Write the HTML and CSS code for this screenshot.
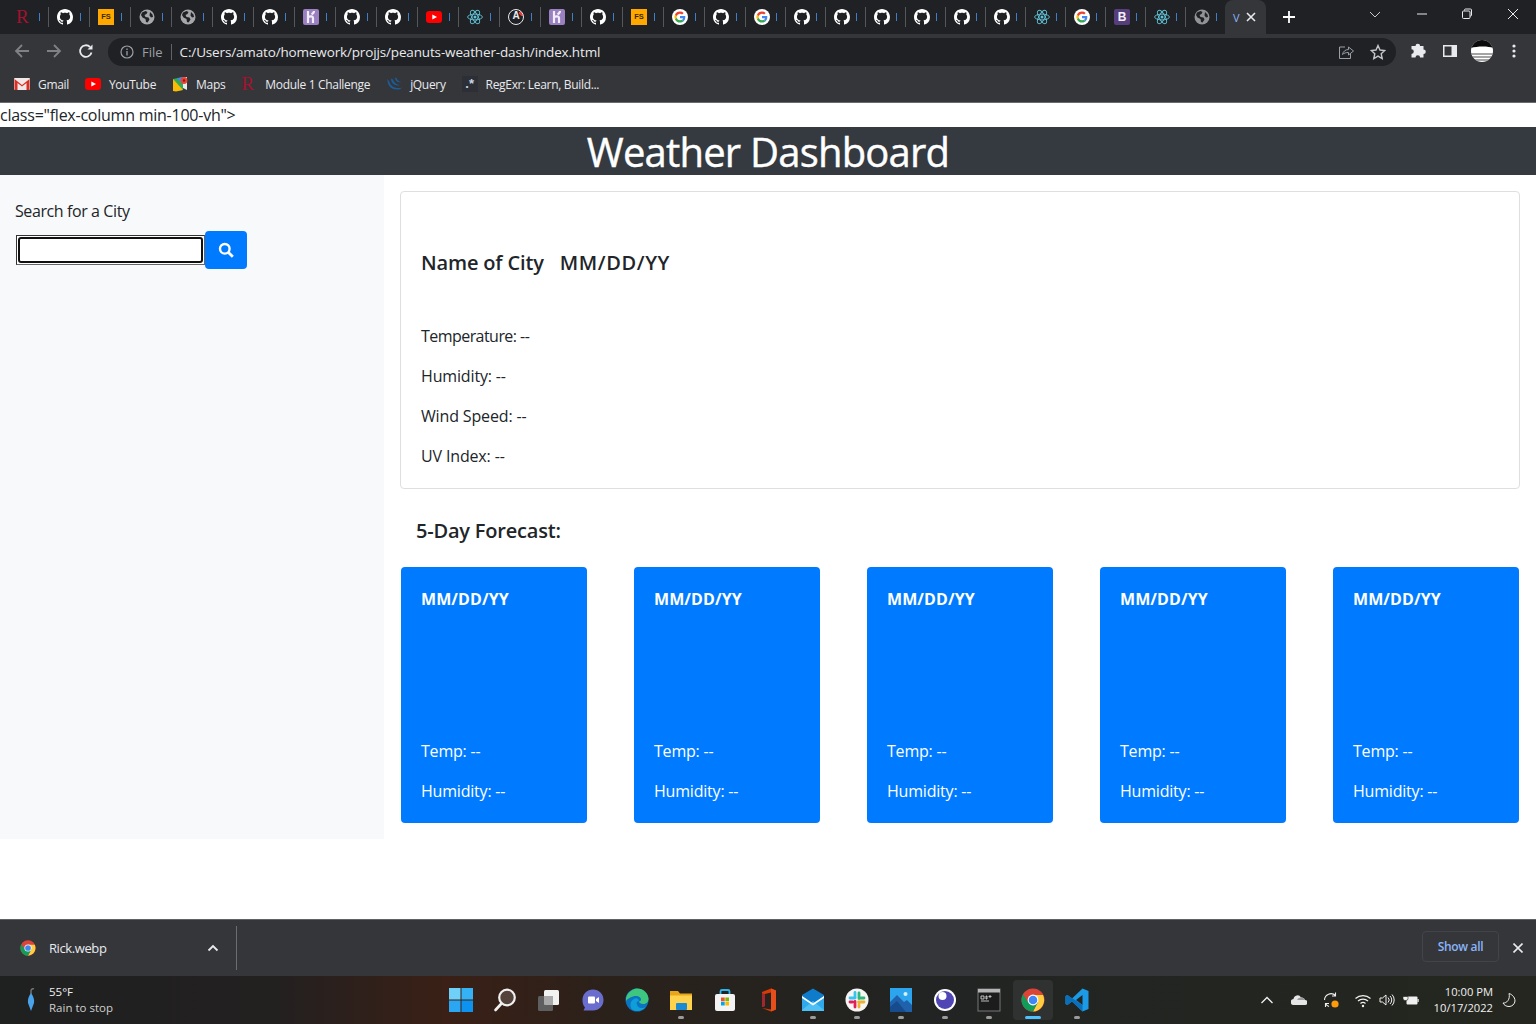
FILE: index.html
```html
<!DOCTYPE html>
<html lang="en">
<head>
    <meta charset="UTF-8">
    <meta name="viewport" content="width=device-width, initial-scale=1.0">
    <title>Weather Dashboard</title>
    <link rel="stylesheet" href="styles.css">
</head>
<body>
    <svg class="icon-defs" aria-hidden="true">
        <symbol id="i-gh" viewBox="0 0 16 16"><circle cx="8" cy="8" r="7.6" fill="#202124"/><path fill="#fff" d="M8 0C3.58 0 0 3.58 0 8c0 3.54 2.29 6.53 5.47 7.59.4.07.55-.17.55-.38 0-.19-.01-.82-.01-1.49-2.01.37-2.53-.49-2.69-.94-.09-.23-.48-.94-.82-1.13-.28-.15-.68-.52-.01-.53.63-.01 1.08.58 1.23.82.72 1.21 1.87.87 2.33.66.07-.52.28-.87.51-1.07-1.78-.2-3.64-.89-3.64-3.95 0-.87.31-1.59.82-2.15-.08-.2-.36-1.02.08-2.12 0 0 .67-.21 2.2.82.64-.18 1.32-.27 2-.27s1.36.09 2 .27c1.53-1.04 2.2-.82 2.2-.82.44 1.1.16 1.92.08 2.12.51.56.82 1.27.82 2.15 0 3.07-1.87 3.75-3.65 3.95.29.25.54.73.54 1.48 0 1.07-.01 1.93-.01 2.2 0 .21.15.46.55.38A8.013 8.013 0 0016 8c0-4.42-3.58-8-8-8z"/></symbol>
        <symbol id="i-globe" viewBox="0 0 16 16"><circle cx="8" cy="8" r="7.5" fill="#a6a7aa"/><path fill="#202124" d="M3 3.500l3.500-1.500 2 1-1 2-2 1 1 2 3 .5 1 2-2 3-1.500-.5-.5-3-3-1.500-1.500-2.500zM11 3l2.500 2.500.5 2.500-2 .5-1.500-2z"/></symbol>
        <symbol id="i-heroku" viewBox="0 0 16 16"><rect width="16" height="16" rx="2" fill="#9a7fc1"/><path fill="none" stroke="#f2eef8" stroke-width="2.200" d="M5 2v12M5 8c2-1 5-1 5 .8V14M11 2c0 1.500-1 2.500-2.500 3.200"/></symbol>
        <symbol id="i-yt" viewBox="0 0 16 16"><rect y="2" width="16" height="12" rx="3.200" fill="#f00"/><path fill="#fff" d="M6.300 5.400v5.200L11 8z"/></symbol>
        <symbol id="i-react" viewBox="0 0 16 16"><g fill="none" stroke="#61c3d8" stroke-width=".9"><ellipse cx="8" cy="8" rx="7.400" ry="2.900"/><ellipse cx="8" cy="8" rx="7.400" ry="2.900" transform="rotate(60 8 8)"/><ellipse cx="8" cy="8" rx="7.400" ry="2.900" transform="rotate(120 8 8)"/></g><circle cx="8" cy="8" r="1.500" fill="#61c3d8"/></symbol>
        <symbol id="i-google" viewBox="0 0 16 16"><circle cx="8" cy="8" r="8" fill="#fff"/><path fill="#4285f4" d="M13.300 8.100c0-.4 0-.8-.1-1.100H8v2.200h3a2.600 2.600 0 01-1.100 1.700l1.800 1.400c1-1 1.600-2.400 1.600-4.200z"/><path fill="#34a853" d="M8 13.500c1.500 0 2.700-.5 3.700-1.300l-1.800-1.400c-.5.300-1.100.5-1.900.5-1.400 0-2.700-1-3.100-2.300H3v1.400a5.500 5.500 0 005 3.100z"/><path fill="#fbbc05" d="M4.900 9a3.300 3.300 0 010-2.100V5.500H3a5.500 5.500 0 000 5z"/><path fill="#ea4335" d="M8 4.700c.8 0 1.500.3 2.100.8l1.600-1.600A5.400 5.400 0 008 2.500a5.500 5.500 0 00-5 3l1.900 1.400C5.300 5.700 6.600 4.700 8 4.700z"/></symbol>
        <symbol id="i-chrome" viewBox="0 0 24 24"><circle cx="12" cy="12" r="11.500" fill="#db4437"/><path fill="#ffcd40" d="M12 7h10a11.500 11.500 0 01-10 16.500L17 14z"/><path fill="#0f9d58" d="M12 23.500l5-9.500-10 0L2 6.300A11.500 11.500 0 0012 23.500z"/><circle cx="12" cy="12" r="5.400" fill="#fff"/><circle cx="12" cy="12" r="4.300" fill="#4285f4"/></symbol>
    </svg>

    <div class="tabstrip">
        <div class="tab"><span class="fav fav-r">R</span><span class="frag"></span></div>
        <div class="tab"><svg class="fav"><use href="#i-gh"/></svg><span class="frag"></span></div>
        <div class="tab"><span class="fav fav-fs">FS</span><span class="frag"></span></div>
        <div class="tab"><svg class="fav"><use href="#i-globe"/></svg><span class="frag"></span></div>
        <div class="tab"><svg class="fav"><use href="#i-globe"/></svg><span class="frag"></span></div>
        <div class="tab"><svg class="fav"><use href="#i-gh"/></svg><span class="frag"></span></div>
        <div class="tab"><svg class="fav"><use href="#i-gh"/></svg><span class="frag"></span></div>
        <div class="tab"><svg class="fav"><use href="#i-heroku"/></svg><span class="frag"></span></div>
        <div class="tab"><svg class="fav"><use href="#i-gh"/></svg><span class="frag"></span></div>
        <div class="tab"><svg class="fav"><use href="#i-gh"/></svg><span class="frag"></span></div>
        <div class="tab"><svg class="fav"><use href="#i-yt"/></svg><span class="frag"></span></div>
        <div class="tab"><svg class="fav"><use href="#i-react"/></svg><span class="frag"></span></div>
        <div class="tab"><span class="fav fav-a">A</span><span class="frag"></span></div>
        <div class="tab"><svg class="fav"><use href="#i-heroku"/></svg><span class="frag"></span></div>
        <div class="tab"><svg class="fav"><use href="#i-gh"/></svg><span class="frag"></span></div>
        <div class="tab"><span class="fav fav-fs">FS</span><span class="frag"></span></div>
        <div class="tab"><svg class="fav"><use href="#i-google"/></svg><span class="frag"></span></div>
        <div class="tab"><svg class="fav"><use href="#i-gh"/></svg><span class="frag"></span></div>
        <div class="tab tab-sm"><svg class="fav"><use href="#i-google"/></svg><span class="frag"></span></div>
        <div class="tab tab-sm"><svg class="fav"><use href="#i-gh"/></svg><span class="frag"></span></div>
        <div class="tab tab-sm"><svg class="fav"><use href="#i-gh"/></svg><span class="frag"></span></div>
        <div class="tab tab-sm"><svg class="fav"><use href="#i-gh"/></svg><span class="frag"></span></div>
        <div class="tab tab-sm"><svg class="fav"><use href="#i-gh"/></svg><span class="frag"></span></div>
        <div class="tab tab-sm"><svg class="fav"><use href="#i-gh"/></svg><span class="frag"></span></div>
        <div class="tab tab-sm"><svg class="fav"><use href="#i-gh"/></svg><span class="frag"></span></div>
        <div class="tab tab-sm"><svg class="fav"><use href="#i-react"/></svg><span class="frag"></span></div>
        <div class="tab tab-sm"><svg class="fav"><use href="#i-google"/></svg><span class="frag"></span></div>
        <div class="tab tab-sm"><span class="fav fav-b">B</span><span class="frag"></span></div>
        <div class="tab tab-sm"><svg class="fav"><use href="#i-react"/></svg><span class="frag"></span></div>
        <div class="tab tab-sm"><svg class="fav fav-dim"><use href="#i-globe"/></svg><span class="frag"></span></div>
        <div class="tab-active">
            <span class="tab-v">V</span>
            <svg class="tab-x" viewBox="0 0 10 10"><path d="M1 1l8 8M9 1l-8 8" stroke="#e8eaed" stroke-width="1.600"/></svg>
        </div>
        <svg class="tab-plus" viewBox="0 0 12 12"><path d="M6 0v12M0 6h12" stroke="#fff" stroke-width="1.800"/></svg>
        <div class="win-btns">
            <svg class="win-btn" viewBox="0 0 12 12"><path d="M1 4l5 5 5-5" fill="none" stroke="#c8cacd"/></svg>
            <svg class="win-btn" viewBox="0 0 12 12"><path d="M1 6h10" stroke="#e8eaed"/></svg>
            <svg class="win-btn" viewBox="0 0 12 12"><path d="M3.500 2.500V2a1 1 0 011-1h5a1 1 0 011 1v5a1 1 0 01-1 1H9" fill="none" stroke="#e8eaed"/><rect x="1.500" y="3" width="7.500" height="7.500" rx="1" fill="none" stroke="#e8eaed"/></svg>
            <svg class="win-btn" viewBox="0 0 12 12"><path d="M1 1l10 10M11 1L1 11" stroke="#e8eaed"/></svg>
        </div>
    </div>

    <div class="toolbar">
        <div class="nav-btns">
            <svg class="nav-icon" viewBox="0 0 16 16"><path d="M15 8H2M8 2L2 8l6 6" fill="none" stroke="#7f8184" stroke-width="1.800"/></svg>
            <svg class="nav-icon" viewBox="0 0 16 16"><path d="M1 8h13M8 2l6 6-6 6" fill="none" stroke="#7f8184" stroke-width="1.800"/></svg>
            <svg class="nav-icon" viewBox="0 0 16 16"><path d="M13.500 9.500A5.800 5.800 0 1112 4" fill="none" stroke="#e8eaed" stroke-width="1.800"/><path d="M14.500 1.500v5h-5z" fill="#e8eaed"/></svg>
        </div>
        <div class="omnibox">
            <svg class="info-icon" viewBox="0 0 14 14"><circle cx="7" cy="7" r="6" fill="none" stroke="#9aa0a6" stroke-width="1.200"/><path d="M7 6v4.500M7 3.500v1.400" stroke="#9aa0a6" stroke-width="1.300"/></svg>
            <span class="omni-file">File</span>
            <span class="omni-sep"></span>
            <span class="omni-url">C:/Users/amato/homework/projjs/peanuts-weather-dash/index.html</span>
            <svg class="omni-share" viewBox="0 0 16 16"><path d="M7 3H1.500v11.500h11V10" fill="none" stroke="#9aa0a6"/><path d="M4.500 10.500C5 7.500 7.500 5.500 10.500 5.500V3l5 4-5 4V8.500c-2.500 0-4.500.5-6 2z" fill="none" stroke="#9aa0a6"/></svg>
            <svg class="omni-star" viewBox="0 0 16 16"><path d="M8 1.500l2 4.500 4.800.5-3.600 3.200 1 4.800L8 12.100l-4.200 2.400 1-4.800L1.200 6.500 6 6z" fill="none" stroke="#c4c7ca" stroke-width="1.400"/></svg>
        </div>
        <div class="tool-icons">
            <svg class="tool-icon" viewBox="0 0 16 16"><path fill="#e8eaed" d="M5.500 3a2.300 2.300 0 014.600 0h3.400v3.400a2.300 2.300 0 010 4.600V14.500h-3.400a2.300 2.300 0 00-4.600 0H1.500v-3.600a2.300 2.300 0 000-4.600V3z"/></svg>
            <svg class="tool-icon" viewBox="0 0 16 16"><path fill="#e8eaed" fill-rule="evenodd" d="M1 2h14v12H1zM2.500 3.500v9h7v-9z"/></svg>
            <svg class="avatar" viewBox="0 0 22 22"><defs><clipPath id="av"><circle cx="11" cy="11" r="11"/></clipPath></defs><g clip-path="url(#av)"><rect width="22" height="22" fill="#fff"/><path d="M0 0h22v8c-4-2-16-2-22 0z" fill="#0b0b0b"/><path d="M0 14h22M0 17h22M0 20h22" stroke="#4a4a4a" stroke-width="1.200"/></g></svg>
            <svg class="tool-icon" viewBox="0 0 16 16"><circle cx="8" cy="3" r="1.600" fill="#e8eaed"/><circle cx="8" cy="8" r="1.600" fill="#e8eaed"/><circle cx="8" cy="13" r="1.600" fill="#e8eaed"/></svg>
        </div>
    </div>

    <div class="bookmarks">
        <div class="bookmark"><svg class="fav" viewBox="0 0 16 16"><rect y="2" width="16" height="12" rx="1" fill="#f1e9e7"/><path d="M.5 3L8 9l7.500-6v11h-3V7L8 10.500 3.500 7v7h-3z" fill="#d93025"/></svg>Gmail</div>
        <div class="bookmark"><svg class="fav"><use href="#i-yt"/></svg>YouTube</div>
        <div class="bookmark"><svg class="fav" viewBox="0 0 16 16"><path d="M1 3l10-2v13L1 15z" fill="#34a853"/><path d="M1 3l10 11-7 1.500L1 15z" fill="#fbbc05"/><path d="M5 2.200l6 6V1z" fill="#4285f4"/><path d="M11 1v11l4 2V1z" fill="#e8eaed"/><circle cx="12" cy="4.500" r="3.400" fill="#ea4335"/><circle cx="12" cy="4.500" r="1.200" fill="#8c1b11"/></svg>Maps</div>
        <div class="bookmark"><span class="fav fav-r">R</span>Module 1 Challenge</div>
        <div class="bookmark"><svg class="fav" viewBox="0 0 16 16"><path d="M1.500 3C1 9 5 14 12 13.500 15 13.200 15.500 12 16 11.500 12 13 5 12 3.500 6zM5 2.500c0 5 4 8 10 6.500-4 0-7-2-8-5.500zM9 1.500c0 3.500 3 5.500 6.500 4.500-2.500-.2-4-1.500-5-4z" fill="#1b5d9a"/></svg>jQuery</div>
        <div class="bookmark"><span class="fav fav-rx">.*</span>RegExr: Learn, Build...</div>
    </div>

    <div class="page">
        <div class="stray">class="flex-column min-100-vh"&gt;</div>
        <header class="site-header">
            <h1>Weather Dashboard</h1>
        </header>
        <div class="content">
            <aside class="sidebar">
                <label class="search-label" for="city">Search for a City</label>
                <form class="search-form">
                    <span class="search-frame"><input class="search-input" id="city" type="text"></span>
                    <button type="button" class="search-btn">
                        <svg viewBox="0 0 16 16"><circle cx="6.800" cy="6.800" r="4.800" fill="none" stroke="#fff" stroke-width="2.400"/><path d="M10.500 10.500l4.300 4.300" stroke="#fff" stroke-width="2.800"/></svg>
                    </button>
                </form>
            </aside>
            <main class="main">
                <section class="today">
                    <h2 class="today-title"><span>Name of City</span><span class="today-date">MM/DD/YY</span></h2>
                    <p class="today-temp">Temperature: --</p>
                    <p>Humidity: --</p>
                    <p>Wind Speed: --</p>
                    <p>UV Index: --</p>
                </section>
                <h3 class="forecast-title">5-Day Forecast:</h3>
                <div class="forecast">
                    <div class="day-card">
                        <h4>MM/DD/YY</h4>
                        <p>Temp: --</p>
                        <p>Humidity: --</p>
                    </div>
                    <div class="day-card">
                        <h4>MM/DD/YY</h4>
                        <p>Temp: --</p>
                        <p>Humidity: --</p>
                    </div>
                    <div class="day-card">
                        <h4>MM/DD/YY</h4>
                        <p>Temp: --</p>
                        <p>Humidity: --</p>
                    </div>
                    <div class="day-card">
                        <h4>MM/DD/YY</h4>
                        <p>Temp: --</p>
                        <p>Humidity: --</p>
                    </div>
                    <div class="day-card">
                        <h4>MM/DD/YY</h4>
                        <p>Temp: --</p>
                        <p>Humidity: --</p>
                    </div>
                </div>
            </main>
        </div>
    </div>

    <div class="downloads">
        <div class="dl-item">
            <svg class="dl-icon"><use href="#i-chrome"/></svg>
            <span class="dl-name">Rick.webp</span>
            <svg class="dl-chevron" viewBox="0 0 12 8"><path d="M1.500 6.500L6 2l4.500 4.500" fill="none" stroke="#e8eaed" stroke-width="1.800"/></svg>
        </div>
        <button type="button" class="show-all">Show all</button>
        <svg class="dl-close" viewBox="0 0 10 10"><path d="M.5.5l9 9M9.500.5l-9 9" stroke="#e8eaed" stroke-width="1.600"/></svg>
    </div>

    <div class="taskbar">
        <div class="weather">
            <svg class="umbrella" viewBox="0 0 10 24"><path d="M5 6V3a2 2 0 013-2" fill="none" stroke="#777" stroke-width="1.400"/><path d="M5 5c2.500 3 3.500 7 3 10l-3 8-3-8C1.500 12 2.500 8 5 5z" fill="#4aa3ea"/></svg>
            <div class="weather-text">
                <span class="temp">55°F</span>
                <span class="cond">Rain to stop</span>
            </div>
        </div>
        <div class="apps">
            <div class="app"><svg viewBox="0 0 24 24"><path fill="#6fd0f8" d="M0 0h11.500v11.500H0z"/><path fill="#35b2f5" d="M12.500 0H24v11.500H12.500z"/><path fill="#2aa6f2" d="M0 12.500h11.500V24H0z"/><path fill="#0e92ef" d="M12.500 12.500H24V24H12.500z"/></svg></div>
            <div class="app"><svg viewBox="0 0 24 24"><circle cx="14" cy="9.500" r="7.800" fill="#54433c" stroke="#f0f0f0" stroke-width="2.200"/><path d="M8.500 15.500l-6 6.500" stroke="#f0f0f0" stroke-width="2.600" stroke-linecap="round"/></svg></div>
            <div class="app"><svg viewBox="0 0 24 24"><rect x="7" y="2" width="15" height="15" rx="1.500" fill="#f2f2f2"/><rect x="1" y="8" width="15" height="15" rx="1.500" fill="#5f5f5f"/><path d="M7 8h9v9H8a1 1 0 01-1-1z" fill="#a9a9a9"/></svg></div>
            <div class="app"><svg viewBox="0 0 24 24"><path d="M12 1.500c6 0 10.500 4.500 10.500 10.500S18 22.500 12 22.500H2.500l1.500-3C2.300 17.500 1.500 15 1.500 12 1.500 6 6 1.500 12 1.500z" fill="#6a6dcd"/><rect x="7" y="8.500" width="7" height="7" rx="1" fill="#fff"/><path d="M15 11l3-2v6l-3-2z" fill="#fff"/></svg></div>
            <div class="app"><svg viewBox="0 0 24 24"><circle cx="12" cy="12" r="11.500" fill="#0c72c4"/><path d="M1 10C3 3 9 .5 12 .5c6.500 0 11.500 5 11.500 10.500 0 3-2.500 5-5.500 5-2 0-4-1-4-2.500 2-.5 2.500-2 1.500-3.500C14 8 11 7.500 8 8.500 5 9.500 2 11 1 13z" fill="#3ec57e"/><path d="M8 22c-3-2-3.500-7-.5-10s6-2 6.500 1c-3 .5-3 3-1 5.500 1.500 1.500 5 2.500 7.500 .5-2 3-8 5.500-12.500 3z" fill="#0e9fd8"/></svg></div>
            <div class="app"><svg viewBox="0 0 24 24"><path d="M1 3h8l2 2.500h12V9H1z" fill="#e8a71a"/><path d="M1 7.500h22V22H1z" fill="#ffd24d"/><rect x="7" y="15" width="11" height="7" rx="1" fill="#1a8ad4"/></svg></div>
            <div class="app"><svg viewBox="0 0 24 24"><path d="M7.500 6V3.500a1.500 1.500 0 011.500-1.500h6a1.500 1.500 0 011.500 1.500V6" fill="none" stroke="#2cb6f0" stroke-width="1.800"/><rect x="2" y="6" width="20" height="17" rx="2" fill="#f3f3f3"/><path fill="#f25022" d="M8 9.500h3.700v3.700H8z"/><path fill="#7fba00" d="M12.300 9.500H16v3.700h-3.700z"/><path fill="#00a4ef" d="M8 13.800h3.700v3.700H8z"/><path fill="#ffb900" d="M12.300 13.800H16v3.700h-3.700z"/></svg></div>
            <div class="app"><svg viewBox="0 0 24 24"><path d="M5 4l9-3.500 5 2v19l-5 2-9-3.500 9 1.500V4.500L8 6v12l-3 1z" fill="#d83b01"/><path d="M14 .5l5 2v19l-5 2z" fill="#e84d1c"/><path d="M5 5l3 1v12l-3 1z" fill="#a3262e"/></svg></div>
            <div class="app"><svg viewBox="0 0 24 24"><path d="M1 7l11-6.500L23 7v15a1 1 0 01-1 1H2a1 1 0 01-1-1z" fill="#0f7bcb"/><path d="M1 8l11 7 11-7v15H1z" fill="#30a8ec"/><path d="M1 22l11-9 11 9v1H1z" fill="#4fc0f5"/><path d="M1 8l11 7.500L23 8v2l-11 7.500L1 10z" fill="#fff"/></svg></div>
            <div class="app"><svg viewBox="0 0 24 24"><circle cx="12" cy="12" r="11.500" fill="#f7f5f4"/><path d="M10 4.500v5" stroke="#36c5f0" stroke-width="2.800" stroke-linecap="round"/><path d="M5 10h5" stroke="#36c5f0" stroke-width="2.800" stroke-linecap="round"/><path d="M14 5v5.500M19 10h-3" stroke="#2eb67d" stroke-width="2.800" stroke-linecap="round"/><path d="M19 14h-5.500M14 19v-2.500" stroke="#ecb22e" stroke-width="2.800" stroke-linecap="round"/><path d="M10 19v-5.500M5 14h2.500" stroke="#e01e5a" stroke-width="2.800" stroke-linecap="round"/></svg></div>
            <div class="app"><svg viewBox="0 0 24 24"><rect x="1" y="0" width="22" height="24" fill="#2da5ee"/><path d="M1 24V14l7-7 7 7 3-2 5 5v7z" fill="#1f62ab"/><path d="M1 24v-5l7-6 9 11z" fill="#164b8d"/><circle cx="16.500" cy="6" r="2" fill="#d5f0ff"/></svg></div>
            <div class="app"><svg viewBox="0 0 24 24"><circle cx="12" cy="12" r="11" fill="#fff"/><circle cx="12" cy="12" r="9" fill="#4f45b4"/><circle cx="9.500" cy="8" r="4" fill="#fff"/></svg></div>
            <div class="app"><svg viewBox="0 0 24 24"><rect x="1" y="1" width="22" height="22" fill="#1c1c1c" stroke="#777"/><rect x="1" y="1" width="22" height="3.500" fill="#b5b5b5"/><path d="M4 8h3v3H4zM9 8h1v3H9zM12 8h2v1h-2zM4 13h8" stroke="#e8e8e8" stroke-width=".8" fill="none"/></svg></div>
            <div class="app app-active"><svg><use href="#i-chrome"/></svg></div>
            <div class="app"><svg viewBox="0 0 24 24"><path d="M17.500.5L23.500 3v18l-6 2.500L7 13.500 2.500 17 .5 16V8l2-1 4.500 3.500zM17.500 7L11 12l6.500 5z" fill="#1c9ae6"/><path d="M.5 8l2-1L17.500 17v6.500L7 13.500 2.500 17 .5 16z" fill="#0a6fb8"/></svg></div>
        </div>
        <div class="tray">
            <svg class="tray-icon" viewBox="0 0 16 16"><path d="M2.500 11L8 5.500l5.500 5.500" fill="none" stroke="#f0f0f0" stroke-width="1.300"/></svg>
            <svg class="tray-icon" viewBox="0 0 16 16"><path d="M3 13a3 3 0 01-.5-6 4 4 0 017.500-1.500 3.500 3.500 0 014 2.500 2.500 2.500 0 010 5z" fill="#e6e6e6"/><path d="M10 5.500a3.500 3.500 0 014 2.500H6a4 4 0 014-2.500z" fill="#9a9a9a"/></svg>
            <svg class="tray-icon" viewBox="0 0 16 16"><path d="M1.500 8A6.500 6.500 0 0112.500 3.500M12.500.5V4H9M2.500 15v-3.500H6M2.500 11.500A6.500 6.500 0 006 14.500" fill="none" stroke="#f0f0f0" stroke-width="1.100"/><circle cx="12" cy="12" r="3.600" fill="#ff9a0d"/></svg>
            <svg class="tray-icon tray-wifi" viewBox="0 0 16 16"><path d="M.5 6.500a11 11 0 0115 0M3 9a7.500 7.500 0 0110 0M5.500 11.500a3.800 3.800 0 015 0" fill="none" stroke="#f0f0f0" stroke-width="1.200"/><circle cx="8" cy="14" r="1.200" fill="#f0f0f0"/></svg>
            <svg class="tray-icon tray-vol" viewBox="0 0 16 16"><path d="M1 6v4h2.500L7 13V3L3.500 6z" fill="none" stroke="#f0f0f0"/><path d="M9 5.500a3.500 3.500 0 010 5M11 4a5.500 5.500 0 010 8M13 2.500a8 8 0 010 11" fill="none" stroke="#f0f0f0"/></svg>
            <svg class="tray-icon tray-bat" viewBox="0 0 16 16"><rect x="3.500" y="4.500" width="11" height="8" rx="1" fill="#f0f0f0"/><path d="M14.500 7h1.200v3h-1.200z" fill="#f0f0f0"/><path d="M1 1.500v3M4 1.500v3M0 4.500h5v2a2 2 0 01-2 2H2a2 2 0 01-2-2z" fill="#f0f0f0" stroke="#24261f" stroke-width=".6"/></svg>
            <div class="clock">
                <span>10:00 PM</span>
                <span>10/17/2022</span>
            </div>
            <svg class="tray-moon" viewBox="0 0 16 16"><path d="M8 1.500c2 .5 6 3 6 7.500a6 6 0 01-6 5.500c-3 0-5-1.500-6-3.500 3.500.5 7.500-3.500 6-9.500z" fill="none" stroke="#f0f0f0" stroke-width="1"/></svg>
        </div>
    </div>
</body>
</html>
```

FILE: styles.css
```css
* {
    box-sizing: border-box;
}
body {
    font-family: "Open Sans", "Noto Sans", sans-serif;
    margin: 0;
    padding: 0;
    height: 1024px;
    display: flex;
    flex-direction: column;
    overflow: hidden;
    background-color: #fff;
    color: #212529;
}
.icon-defs {
    width: 0;
    height: 0;
    display: block;
    flex: none;
}
svg {
    display: block;
    flex: none;
}

/* tab strip */
.tabstrip {
    height: 34px;
    flex: none;
    display: flex;
    align-items: center;
    padding-left: 8px;
    background: #202124;
}
.tab {
    width: 41px;
    height: 20px;
    margin-top: -1px;
    display: flex;
    align-items: center;
    justify-content: space-between;
    padding: 0 8px 0 8px;
    border-right: 1px solid #55575b;
}
.tab-sm {
    width: 40px;
}
.fav {
    width: 16px;
    height: 16px;
    flex: none;
}
.fav-dim {
    opacity: 0.85;
}
.fav-r {
    font-family: "Liberation Serif", serif;
    font-size: 19px;
    line-height: 16px;
    letter-spacing: 0;
    text-align: left;
    color: #a3122f;
}
.fav-fs {
    font-family: "Liberation Sans", sans-serif;
    font-size: 7.5px;
    font-weight: 700;
    line-height: 16px;
    text-align: center;
    color: #3a2a00;
    background: #ffa900;
}
.fav-a {
    font-family: "Liberation Sans", sans-serif;
    font-size: 10px;
    font-weight: 700;
    line-height: 12px;
    text-align: center;
    color: #e8eaed;
    border: 1.5px solid #e8eaed;
    border-radius: 50%;
    box-shadow: inset 0 0 0 0 #000;
    background: radial-gradient(circle at 13px 3px, #e33b3b 2.6px, transparent 3px);
}
.fav-b {
    font-family: "Liberation Sans", sans-serif;
    font-size: 12px;
    font-weight: 700;
    line-height: 16px;
    text-align: center;
    color: #f4f0fa;
    background: #563d7c;
    border-radius: 2px;
}
.fav-rx {
    font-family: "Liberation Sans", sans-serif;
    font-size: 13px;
    font-weight: 700;
    line-height: 16px;
    letter-spacing: 0;
    text-align: center;
    color: #c9d6e4;
    background: #2c3036;
}
.frag {
    width: 1px;
    height: 8px;
    background: #3f7fc8;
}
.tab-active {
    width: 41px;
    height: 34px;
    margin-left: -1px;
    display: flex;
    align-items: center;
    padding-left: 8px;
    gap: 6px;
    background: #35363a;
    border-radius: 8px 8px 0 0;
}
.tab-v {
    width: 7px;
    font-size: 11px;
    color: #8ab4f8;
}
.tab-x {
    width: 10px;
    height: 10px;
}
.tab-plus {
    width: 12px;
    height: 12px;
    margin-left: 17px;
}
.win-btns {
    margin-left: auto;
    display: flex;
    height: 34px;
    margin-top: -6px;
    align-items: center;
}
.win-btn {
    width: 12px;
    height: 12px;
    margin-right: 34px;
}
.win-btn:nth-child(2) {
    margin-right: 33px;
}
.win-btn:last-child {
    margin-right: 17px;
}
.win-btn:first-child {
    margin-right: 35px;
}

/* toolbar */
.toolbar {
    height: 34px;
    flex: none;
    display: flex;
    align-items: center;
    background: #35363a;
    padding-left: 14px;
}
.nav-btns {
    display: flex;
    gap: 16px;
    width: 94px;
}
.nav-icon {
    width: 16px;
    height: 16px;
}
.omnibox {
    width: 1288px;
    height: 28px;
    margin-top: 2px;
    display: flex;
    align-items: center;
    padding: 0 10px 0 12px;
    border-radius: 14px;
    background: #202124;
    font-size: 13px;
}
.info-icon {
    width: 14px;
    height: 14px;
}
.omni-file {
    margin-left: 8px;
    color: #9aa0a6;
}
.omni-sep {
    width: 1px;
    height: 16px;
    margin: 0 8px;
    background: #5f6368;
}
.omni-url {
    color: #e8eaed;
    font-size: 13.5px;
    letter-spacing: -0.15px;
}
.omni-share {
    width: 16px;
    height: 16px;
    margin-left: auto;
    margin-right: 16px;
}
.omni-star {
    width: 16px;
    height: 16px;
}
.tool-icons {
    display: flex;
    align-items: center;
    margin-left: 14px;
    gap: 16px;
}
.tool-icon {
    width: 16px;
    height: 16px;
}
.avatar {
    width: 22px;
    height: 22px;
    margin: 0 -3px;
}

/* bookmarks */
.bookmarks {
    height: 35px;
    flex: none;
    display: flex;
    align-items: center;
    gap: 16px;
    padding: 0 0 2px 14px;
    background: #35363a;
    border-bottom: 1px solid #6a6c70;
    font-size: 12px;
    letter-spacing: -0.32px;
    color: #e8eaed;
}
.bookmark {
    display: flex;
    align-items: center;
    gap: 8px;
}

/* page */
.page {
    flex: 1;
    min-height: 0;
    background: #fff;
}
.stray {
    height: 24px;
    font-size: 16px;
    line-height: 24px;
    letter-spacing: -0.24px;
    color: #212529;
}
.site-header {
    height: 48px;
    padding-top: 1px;
    background: #343a40;
    color: white;
    text-align: center;
}
.site-header h1 {
    margin: 0;
    font-size: 40px;
    font-weight: 500;
    -webkit-text-stroke: 0.4px white;
    line-height: 48px;
    letter-spacing: -0.8px;
}
.content {
    display: flex;
}
.sidebar {
    width: 384px;
    height: 664px;
    padding: 24px 15px 0;
    background: #f8f9fa;
}
.search-label {
    display: block;
    font-size: 16px;
    line-height: 24px;
    letter-spacing: -0.4px;
    margin-bottom: 8px;
}
.search-form {
    display: flex;
    align-items: center;
    padding-left: 1px;
}
.search-frame {
    width: 189px;
    height: 30px;
    padding: 1px;
    border: 1px solid #666;
    border-top-color: #333;
    border-left-color: #333;
    background: #fff;
}
.search-input {
    display: block;
    width: 100%;
    height: 100%;
    border: 2px solid #111;
    border-radius: 3px;
    outline: none;
    padding: 0 2px;
    background: #fff;
}
.search-btn {
    width: 42px;
    height: 38px;
    padding: 0;
    display: flex;
    align-items: center;
    justify-content: center;
    border: none;
    border-radius: 4px;
    background: #007bff;
}
.search-btn svg {
    width: 16px;
    height: 16px;
}
.main {
    flex: 1;
    padding: 16px 16px 0;
}
.today {
    height: 298px;
    padding: 47px 20px 0;
    border: 1px solid #dfdfdf;
    border-radius: 4px;
    font-size: 16px;
    letter-spacing: -0.15px;
}
.today-title {
    display: flex;
    gap: 16px;
    margin: 0 0 37px;
    font-size: 20px;
    font-weight: 600;
    line-height: 48px;
    height: 48px;
    letter-spacing: -0.15px;
}
.today-date {
    letter-spacing: 0.6px;
}
.today p {
    margin: 0 0 16px;
    line-height: 24px;
}
.today .today-temp {
    letter-spacing: -0.55px;
}
.forecast-title {
    margin: 30px 0 24px 16px;
    font-size: 20px;
    font-weight: 600;
    line-height: 24px;
    letter-spacing: -0.2px;
}
.forecast {
    display: flex;
    justify-content: space-between;
    padding: 0 1px;
}
.day-card {
    width: 186px;
    height: 256px;
    padding: 20px;
    display: flex;
    flex-direction: column;
    background: #007bff;
    color: white;
    border-radius: 4px;
    font-size: 16px;
    letter-spacing: -0.2px;
}
.day-card h4 {
    margin: 0 0 auto;
    font-size: 16px;
    font-weight: 700;
    line-height: 24px;
    letter-spacing: 0.1px;
}
.day-card p {
    margin: 0 0 16px;
    line-height: 24px;
}
.day-card p:last-child {
    margin: 0;
}

/* download bar */
.downloads {
    height: 57px;
    flex: none;
    display: flex;
    align-items: center;
    background: #35363a;
    border-top: 1px solid #5f6368;
    color: #e8eaed;
}
.dl-item {
    width: 237px;
    height: 44px;
    display: flex;
    align-items: center;
    padding-left: 20px;
    border-right: 1px solid #6a6c70;
}
.dl-icon {
    width: 16px;
    height: 16px;
}
.dl-name {
    margin-left: 13px;
    font-size: 13px;
    letter-spacing: -0.4px;
}
.dl-chevron {
    width: 12px;
    height: 8px;
    margin-left: auto;
    margin-right: 17px;
}
.show-all {
    width: 77px;
    height: 31px;
    margin: 0 0 3px auto;
    padding: 0;
    background: none;
    border: 1px solid #42444a;
    border-radius: 4px;
    color: #8ab4f8;
    font-family: inherit;
    font-size: 12px;
    font-weight: 600;
    letter-spacing: -0.3px;
}
.dl-close {
    width: 10px;
    height: 10px;
    margin: 0 13px 0 14px;
}

/* taskbar */
.taskbar {
    height: 48px;
    flex: none;
    display: grid;
    grid-template-columns: 1fr auto 1fr;
    background: linear-gradient(90deg, #1f2020 0%, #232020 18%, #3a2016 29%, #2a211b 40%, #212422 60%, #24261f 100%);
    color: #f0f0f0;
}
.weather {
    display: flex;
    align-items: center;
    padding-left: 26px;
}
.umbrella {
    width: 10px;
    height: 24px;
}
.weather-text {
    display: flex;
    flex-direction: column;
    margin-left: 13px;
    font-size: 11.5px;
    line-height: 16px;
}
.cond {
    color: #cfcfcf;
}
.apps {
    display: flex;
    margin-left: 1px;
}
.app {
    width: 44px;
    height: 48px;
    padding-top: 12px;
    display: flex;
    flex-direction: column;
    align-items: center;
}
.app svg {
    width: 24px;
    height: 24px;
}
.app:nth-child(6)::after,
.app:nth-child(9)::after,
.app:nth-child(10)::after,
.app:nth-child(11)::after,
.app:nth-child(12)::after,
.app:nth-child(13)::after,
.app:nth-child(15)::after {
    content: "";
    width: 6px;
    height: 3px;
    margin-top: 4px;
    border-radius: 2px;
    background: #9b9b9b;
}
.app-active {
    width: 40px;
    height: 40px;
    margin: 4px 2px;
    padding-top: 8px;
    border-radius: 4px;
    background: #303231;
}
.app-active::after {
    content: "";
    width: 16px;
    height: 3px;
    margin-top: 4px;
    border-radius: 2px;
    background: #4cc2ff;
}
.tray {
    display: flex;
    align-items: center;
    justify-content: flex-end;
    padding-right: 19px;
}
.tray-icon {
    width: 16px;
    height: 16px;
    margin-right: 16px;
}
.tray-wifi,
.tray-vol {
    margin-right: 8px;
}
.tray-bat {
    margin-right: 15px;
}
.clock {
    display: flex;
    flex-direction: column;
    align-items: flex-end;
    font-size: 11.2px;
    line-height: 16px;
}
.tray-moon {
    width: 16px;
    height: 16px;
    margin-left: 8px;
}
```
